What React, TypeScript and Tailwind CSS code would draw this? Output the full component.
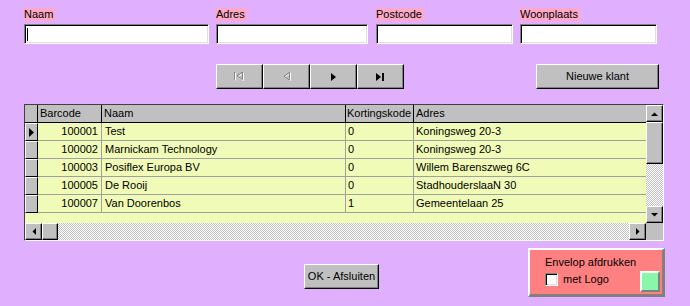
import React from "react";

interface Klant {
  barcode: string;
  naam: string;
  korting: string;
  adres: string;
}

const klanten: Klant[] = [
  { barcode: "100001", naam: "Test", korting: "0", adres: "Koningsweg 20-3" },
  { barcode: "100002", naam: "Marnickam Technology", korting: "0", adres: "Koningsweg 20-3" },
  { barcode: "100003", naam: "Posiflex Europa BV", korting: "0", adres: "Willem Barenszweg 6C" },
  { barcode: "100005", naam: "De Rooij", korting: "0", adres: "StadhouderslaaN 30" },
  { barcode: "100007", naam: "Van Doorenbos", korting: "1", adres: "Gemeentelaan 25" },
];

const raised =
  "bg-[#c0c0c0] border border-t-white border-l-white border-r-black border-b-black shadow-[inset_-1px_-1px_0_#808080]";
const sunken =
  "bg-white border border-t-[#808080] border-l-[#808080] border-r-white border-b-white shadow-[inset_1px_1px_0_#000,inset_-1px_-1px_0_#dfdfdf]";
const dither = "bg-[repeating-conic-gradient(#c0c0c0_0_25%,#ffffff_0_50%)] bg-[length:2px_2px]";

const Field = ({ label, width, cursor }: { label: string; width: string; cursor?: boolean }) => (
  <div className="flex flex-col">
    <span className="self-start bg-[#ffa8c8] h-[13px] leading-[13px] pr-[2px]">{label}</span>
    <div className={`mt-[3px] h-[20px] ${width} ${sunken} flex items-center pl-[2px]`}>
      {cursor && <div className="w-[1px] h-[13px] bg-black" />}
    </div>
  </div>
);

const Tri = ({ dir, className }: { dir: "up" | "down" | "left" | "right"; className?: string }) => {
  const pts = {
    up: "0,4 7,4 3.5,0.5",
    down: "0,0 7,0 3.5,3.5",
    left: "4,0 4,7 0.5,3.5",
    right: "0,0 0,7 3.5,3.5",
  }[dir];
  const vert = dir === "up" || dir === "down";
  return (
    <svg width={vert ? 7 : 4} height={vert ? 4 : 7} viewBox={vert ? "0 0 7 4" : "0 0 4 7"} className={className}>
      <polygon points={pts} fill="black" />
    </svg>
  );
};

export default function App() {
  return (
    <div
      className="w-[690px] h-[306px] bg-[#e0b0ff] text-black text-[11px] flex flex-col overflow-hidden"
      style={{ fontFamily: '"Liberation Sans", Arial, sans-serif' }}
    >
      {/* Zoekvelden */}
      <div className="flex pt-[8px] pl-[24px]">
        <Field label="Naam" width="w-[185px]" cursor />
        <div className="ml-[7px]">
          <Field label="Adres" width="w-[152px]" />
        </div>
        <div className="ml-[8px]">
          <Field label="Postcode" width="w-[137px]" />
        </div>
        <div className="ml-[7px]">
          <Field label="Woonplaats" width="w-[137px]" />
        </div>
      </div>

      {/* Navigatie */}
      <div className="flex mt-[20px] pl-[216px]">
        <div className="flex">
          <button className={`w-[47px] h-[25px] ${raised} flex items-center justify-center`}>
            <svg width="11" height="9" viewBox="0 0 11 9">
              <g transform="translate(1,1)" stroke="white" fill="none">
                <path d="M0.5 0 V7.5" />
                <path d="M8.5 0 V7.5 L3 3.75 L8.5 0" />
              </g>
              <g stroke="#808080" fill="none">
                <path d="M0.5 0 V7.5" />
                <path d="M8.5 0 V7.5 L3 3.75 L8.5 0" />
              </g>
            </svg>
          </button>
          <button className={`w-[47px] h-[25px] ${raised} flex items-center justify-center`}>
            <svg width="8" height="9" viewBox="0 0 8 9">
              <path d="M7 1 V8.5 L1.5 4.75 Z" transform="translate(0.5,0)" stroke="white" fill="none" />
              <path d="M6.5 0.5 V8 L1 4.25 Z" stroke="#808080" fill="none" />
            </svg>
          </button>
          <button className={`w-[47px] h-[25px] ${raised} flex items-center justify-center`}>
            <svg width="6" height="8" viewBox="0 0 6 8">
              <polygon points="0,0 0,8 5,4" fill="black" />
            </svg>
          </button>
          <button className={`w-[47px] h-[25px] ${raised} flex items-center justify-center`}>
            <svg width="9" height="8" viewBox="0 0 9 8">
              <polygon points="0,0 0,8 5,4" fill="black" />
              <rect x="6" y="0" width="2" height="8" fill="black" />
            </svg>
          </button>
        </div>
        <button className={`ml-[132px] w-[123px] h-[25px] ${raised}`}>Nieuwe klant</button>
      </div>

      {/* Klantenlijst */}
      <div className="mt-[15px] ml-[24px] w-[640px] h-[137px] border border-t-[#404040] border-l-[#404040] border-r-white border-b-white flex">
        <div className="flex-1 flex flex-col min-w-0">
          <div className="flex h-[18px] bg-[#c0c0c0] border-b border-black leading-[17px]">
            <div className="w-[13px] border-r border-black bg-[#c0c0c0]" />
            <div className="w-[64px] border-r border-black px-[2px]">Barcode</div>
            <div className="w-[244px] border-r border-black px-[2px]">Naam</div>
            <div className="w-[68px] border-r border-black px-[1px] whitespace-nowrap">Kortingskode</div>
            <div className="flex-1 px-[2px]">Adres</div>
          </div>
          {klanten.map((k, i) => (
            <div key={k.barcode} className="flex h-[18px] leading-[17px]">
              <div className="w-[13px] bg-[#c0c0c0] border-t border-l border-t-white border-l-white border-r border-b border-r-black border-b-black flex items-center justify-center">
                {i === 0 && (
                  <svg width="5" height="9" viewBox="0 0 5 9">
                    <polygon points="0,0 0,9 5,4.5" fill="black" />
                  </svg>
                )}
              </div>
              <div className="w-[64px] bg-[#effbb7] border-r border-b border-[#a0a0a0] text-right pr-[3px]">{k.barcode}</div>
              <div className="w-[244px] bg-[#effbb7] border-r border-b border-[#a0a0a0] px-[3px]">{k.naam}</div>
              <div className="w-[68px] bg-[#effbb7] border-r border-b border-[#a0a0a0] px-[2px]">{k.korting}</div>
              <div className="flex-1 bg-[#effbb7] border-b border-[#a0a0a0] px-[2px]">{k.adres}</div>
            </div>
          ))}
          <div className="flex-1 bg-[#effbb7]" />
          <div className="h-[17px] flex">
            <div className={`w-[17px] ${raised} flex items-center justify-center`}>
              <Tri dir="left" />
            </div>
            <div className={`w-[16px] ${raised}`} />
            <div className={`flex-1 ${dither}`} />
            <div className={`w-[17px] ${raised} flex items-center justify-center`}>
              <Tri dir="right" />
            </div>
          </div>
        </div>
        <div className="w-[17px] flex flex-col">
          <div className={`h-[17px] ${raised} flex items-center justify-center`}>
            <Tri dir="up" />
          </div>
          <div className={`h-[42px] ${raised}`} />
          <div className={`flex-1 ${dither}`} />
          <div className={`h-[17px] ${raised} flex items-center justify-center`}>
            <Tri dir="down" />
          </div>
          <div className="h-[17px] bg-[#c0c0c0]" />
        </div>
      </div>

      {/* Onderkant */}
      <div className="flex items-start mt-[7px]">
        <button className={`ml-[304px] mt-[16px] w-[75px] h-[25px] ${raised}`}>OK - Afsluiten</button>
        <div className="ml-[149px] w-[137px] h-[49px] bg-[#ff8080] border-t-2 border-l-2 border-t-white border-l-white border-r-[3px] border-b-[3px] border-r-[#808080] border-b-[#808080] flex flex-col pl-[15px] pt-[6px]">
          <span className="leading-[13px]">Envelop afdrukken</span>
          <div className="flex items-start mt-[2px]">
            <div className="mt-[2px] w-[13px] h-[13px] bg-white border border-t-[#808080] border-l-[#808080] border-r-white border-b-white shadow-[inset_1px_1px_0_#000,inset_-1px_-1px_0_#dfdfdf]" />
            <span className="ml-[5px] mt-[2px] leading-[13px]">met Logo</span>
            <div className="ml-auto mr-[2px] w-[20px] h-[21px] bg-[#88f8a8] border-t-2 border-l-2 border-t-white border-l-white border-r-2 border-b-2 border-r-[#808080] border-b-[#808080]" />
          </div>
        </div>
      </div>
    </div>
  );
}
